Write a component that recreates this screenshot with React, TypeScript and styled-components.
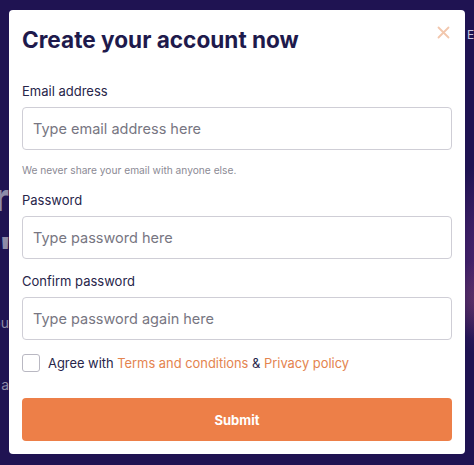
import React, { useState } from 'react';
import styled, { createGlobalStyle } from 'styled-components';


// Global
const GlobalStyle = createGlobalStyle`
  html, body {
    margin: 0;
    padding: 0;
    background: #1f1352;
    font-family: Inter, "Liberation Sans", sans-serif;
  }
  * {
    box-sizing: border-box;
  }
`;

const Page = styled.div`
  position: relative;
  width: 474px;
  height: 465px;
  overflow: hidden;
  padding: 10px 9px 0;
  background:
    radial-gradient(ellipse 50px 100px at 490px 260px, rgba(140, 60, 150, 0.5), transparent),
    radial-gradient(ellipse 30px 40px at 478px 300px, rgba(220, 120, 100, 0.25), transparent),
    #1f1352;
`;

// the page behind the dialog, dimmed
const Behind = styled.div`
  position: absolute;
  top: 0;
  left: 0;
  right: 0;
  bottom: 0;
  pointer-events: none;
`;

const HeroText = styled.span<{ $top: number; $size: number; $right: number }>`
  position: absolute;
  top: ${(p) => p.$top}px;
  right: ${(p) => p.$right}px;
  font-size: ${(p) => p.$size}px;
  font-weight: ${(p) => (p.$size > 20 ? 800 : 400)};
  color: #8f8ca8;
  white-space: nowrap;
`;

const NavLink = styled.span`
  position: absolute;
  top: 27px;
  left: 467px;
  font-size: 12px;
  color: #c9c6e0;
`;

const Modal = styled.div`
  position: relative;
  z-index: 1;
  width: 456px;
  height: 444px;
  background: #fff;
  border-radius: 4px;
  padding: 15px 13px 0;
`;

const Header = styled.div`
  display: flex;
  justify-content: space-between;
  align-items: flex-start;
`;

const Title = styled.h2`
  margin: 0;
  font-size: 22.6px;
  font-weight: 700;
  color: #1e1a4c;
  line-height: 30px;
`;

const CloseButton = styled.button`
  width: 20px;
  height: 20px;
  padding: 0;
  margin: -3px -1px 0 0;
  border: none;
  background: none;
  display: flex;
  align-items: center;
  justify-content: center;
  cursor: pointer;
`;

const Form = styled.form`
  display: flex;
  flex-direction: column;
  margin-top: 27px;
`;

const Field = styled.div<{ $gap: number }>`
  display: flex;
  flex-direction: column;
  margin-bottom: ${(p) => p.$gap}px;
`;

const Label = styled.label`
  font-size: 13px;
  color: #27254a;
  line-height: 18px;
  margin-bottom: 7px;
`;

const Input = styled.input`
  width: 430px;
  height: 43px;
  border: 1px solid #cfced6;
  border-radius: 4px;
  padding: 0 10px;
  font-family: inherit;
  font-size: 14.5px;
  color: #333;
  outline: none;
  &::placeholder {
    color: #777682;
  }
`;

const Help = styled.small`
  margin-top: 14px;
  font-size: 10.2px;
  color: #8b8a94;
  line-height: 12px;
`;

const AgreeRow = styled.label`
  display: flex;
  align-items: center;
  gap: 8px;
  margin-top: 3px;
  font-size: 12.9px;
  color: #27254a;
  cursor: pointer;
`;

const Box = styled.span`
  width: 18px;
  height: 18px;
  border: 1px solid #b9b8c2;
  border-radius: 3px;
  background: #fff;
  flex-shrink: 0;
`;

const TextLink = styled.a`
  color: #e4844f;
  text-decoration: none;
`;

const Submit = styled.button`
  margin-top: 26px;
  width: 430px;
  height: 43px;
  border: none;
  border-radius: 4px;
  background: #ed7f48;
  color: #fff;
  font-family: inherit;
  font-size: 13px;
  font-weight: 700;
  cursor: pointer;
`;


const CloseIcon = () => (
  <svg width="13" height="13" viewBox="0 0 13 13">
    <path d="M1.5 1.5 L11.5 11.5 M11.5 1.5 L1.5 11.5" stroke="#f2c7ad" strokeWidth="1.8" strokeLinecap="round" />
  </svg>
);


const App = () => {
  const [agree, setAgree] = useState(false);

  return (
    <>
      <GlobalStyle />
      <Page>
        <Behind>
          <HeroText $top={174} $size={38} $right={465}>Mentor</HeroText>
          <HeroText $top={228} $size={38} $right={462}>Go'</HeroText>
          <HeroText $top={314} $size={14} $right={465}>you</HeroText>
          <HeroText $top={376} $size={14} $right={465}>a</HeroText>
          <NavLink>E</NavLink>
        </Behind>
        <Modal>
          <Header>
            <Title>Create your account now</Title>
            <CloseButton type="button" aria-label="Close">
              <CloseIcon />
            </CloseButton>
          </Header>
          <Form onSubmit={(e) => e.preventDefault()}>
            <Field $gap={15}>
              <Label>Email address</Label>
              <Input type="email" placeholder="Type email address here" />
              <Help>We never share your email with anyone else.</Help>
            </Field>
            <Field $gap={13}>
              <Label>Password</Label>
              <Input type="password" placeholder="Type password here" />
            </Field>
            <Field $gap={11}>
              <Label>Confirm password</Label>
              <Input type="password" placeholder="Type password again here" />
            </Field>
            <AgreeRow onClick={() => setAgree(!agree)}>
              <Box />
              <span>
                Agree with <TextLink href="#">Terms and conditions</TextLink> &amp;{' '}
                <TextLink href="#">Privacy policy</TextLink>
              </span>
            </AgreeRow>
            <Submit type="submit">Submit</Submit>
          </Form>
        </Modal>
      </Page>
    </>
  );
};

export default App;
